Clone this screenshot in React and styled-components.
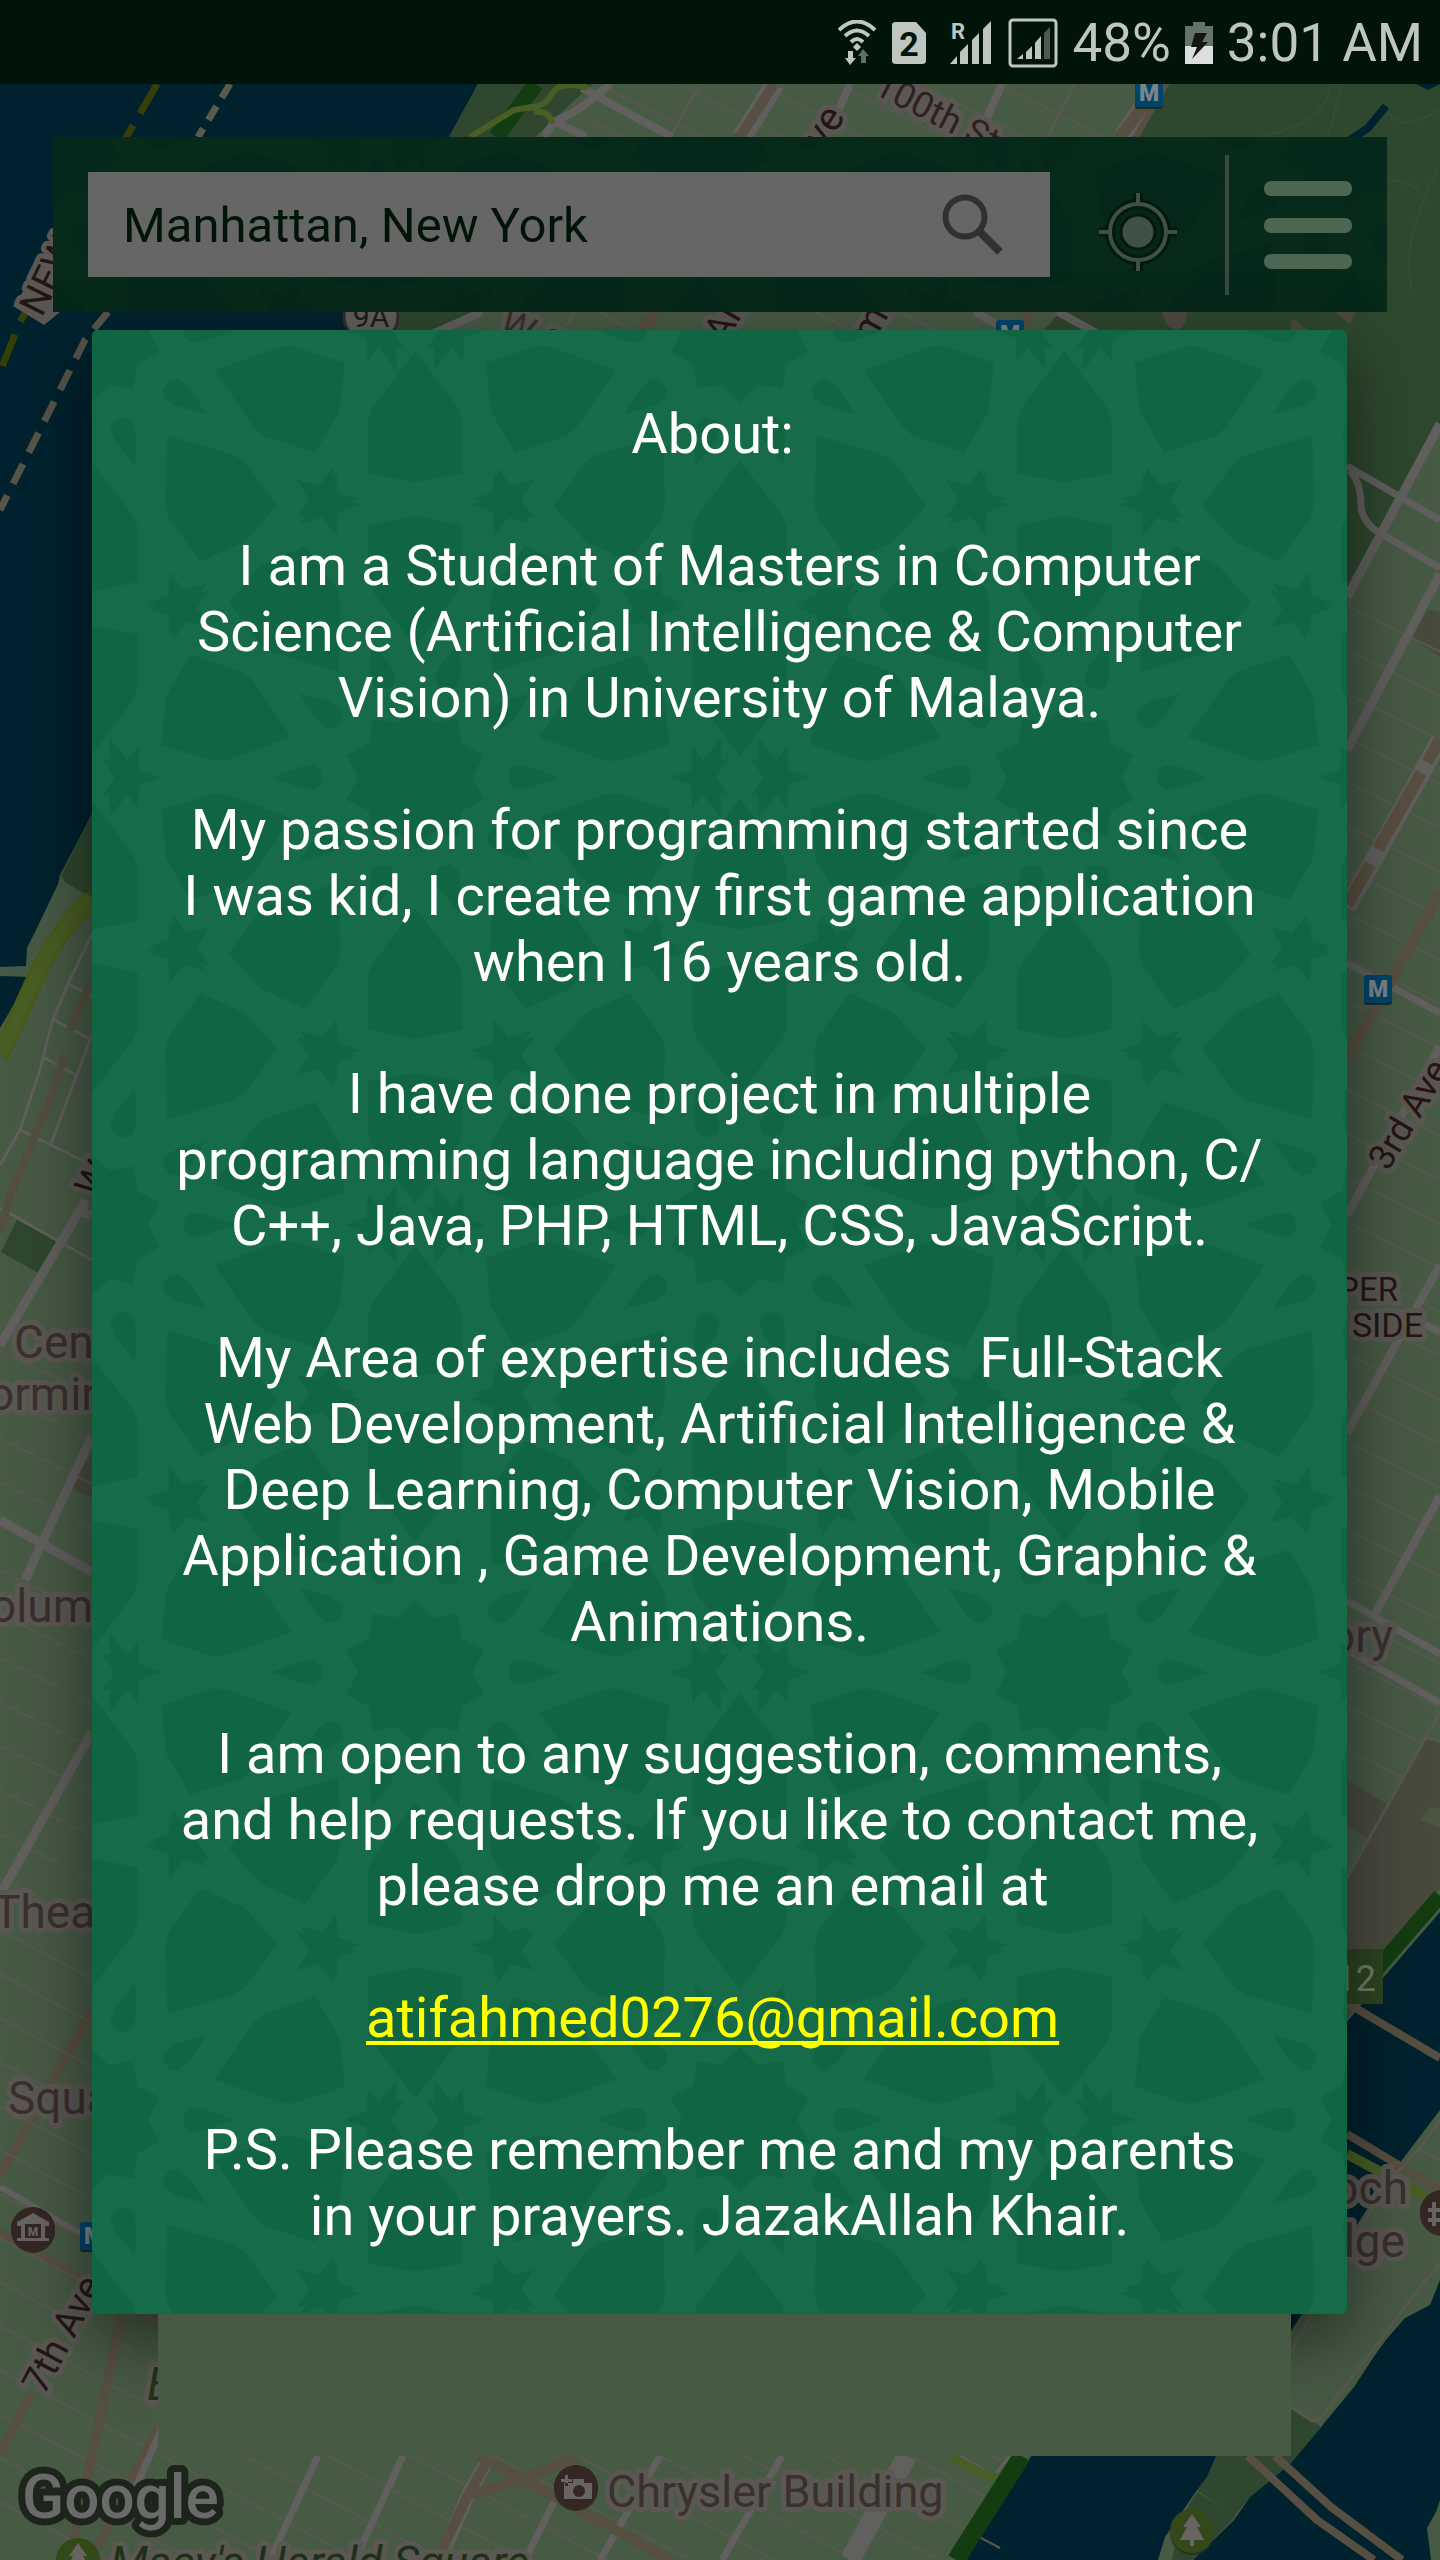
import React from "react";
import styled, { createGlobalStyle } from "styled-components";

const color = {
  bar: "#001408",
  status: "#bfc6c1",
  land: "#475a44",
  water: "#00222e",
  park: "#2e472e",
  road: "#61605f",
  lane: "#585850",
  avenue: "#574f41",
  freeway: "#133c10",
  ramp: "#485e24",
  block: "#494a3e",
  poi: "#342624",
  label: "#3a302d",
  halo: "#5b5853",
};

const GlobalStyle = createGlobalStyle`
  *, *::before, *::after { box-sizing: border-box; }
  body { margin: 0; background: ${color.land}; }
`;

const Page = styled.div`
  position: relative;
  min-height: 100vh;
  overflow: hidden;
  font-family: Roboto, "Liberation Sans", sans-serif;
  background: ${color.land};
`;

const MapCanvas = styled.svg`
  position: absolute;
  inset: 0;
  width: 100%;
  height: 100%;
`;

const Content = styled.div`
  position: relative;
  display: flex;
  flex-direction: column;
`;

const StatusBar = styled.header`
  display: flex;
  justify-content: flex-end;
  align-items: center;
  gap: 14px;
  height: 84px;
  padding: 2px 17px 0;
  background: ${color.bar};
  color: ${color.status};
  font-size: 53px;
  line-height: 64px;
`;

const StatusIcon = styled.svg`
  display: block;
  flex: none;
`;

const Toolbar = styled.form`
  position: relative;
  display: flex;
  align-items: center;
  height: 175px;
  margin: 53px 53px 0;
  padding: 0 0 0 35px;
  background: #06281a;
`;

const SearchBox = styled.div`
  position: relative;
  flex: 1;
  display: flex;
  align-items: center;
  height: 105px;
  padding: 0 40px 0 35px;
  background: #666666;
`;

const SearchInput = styled.input`
  flex: 1;
  min-width: 0;
  height: 100%;
  padding: 2px 0 0;
  border: 0;
  outline: 0;
  background: transparent;
  color: ${color.bar};
  font: 49px Roboto, "Liberation Sans", sans-serif;
`;

const IconButton = styled.button`
  position: relative;
  display: flex;
  align-items: center;
  justify-content: center;
  flex: none;
  width: ${(p) => p.$width}px;
  height: 140px;
  padding: ${(p) => p.$drop || 0}px 0 0;
  border: 0;
  background: transparent;
`;

const Divider = styled.span`
  position: relative;
  width: 4px;
  height: 140px;
  background: #3a4a42;
`;

const Modal = styled.section`
  position: relative;
  margin: 18px 93px 0 92px;
  padding: 71px 64px 65px;
  border-radius: 6px;
  background: #106643;
  box-shadow: 0 24px 72px rgba(0, 0, 0, 0.5);
  color: #ffffff;
  font-size: 56px;
  line-height: 66px;
  text-align: center;
`;

const PatternLayer = styled.svg`
  position: absolute;
  inset: 0;
  width: 100%;
  height: 100%;
  border-radius: inherit;
`;

const Heading = styled.h1`
  position: relative;
  margin: 0 0 66px;
  font: inherit;
`;

const Paragraph = styled.p`
  position: relative;
  margin: 0 0 66px;
  white-space: pre-wrap;

  &:last-child { margin-bottom: 0; }
`;

const MailLink = styled.a`
  color: #ffff00;
  text-decoration: underline;
  text-decoration-thickness: 4px;
  text-underline-offset: 4px;
  text-decoration-skip-ink: none;
`;

const BlankPanel = styled.div`
  position: relative;
  height: 142px;
  margin: 0 149px 0 158px;
  background: ${color.land};
`;

/* ---------- girih tiling used on the toolbar and the dialog ---------- */

const polar = (r, deg) => {
  const a = (deg * Math.PI) / 180;
  return [r * Math.cos(a), r * Math.sin(a)];
};

const starPoints = (n, outer, inner, offset) =>
  Array.from({ length: n * 2 }, (_, i) =>
    polar(i % 2 ? inner : outer, offset + (i * 180) / n)
      .map((v) => v.toFixed(1))
      .join(",")
  ).join(" ");

const TEN = Array.from({ length: 10 }, (_, i) => i * 36);

function Rosette({ id }) {
  return (
    <g id={id}>
      <polygon points={starPoints(10, 172, 136, 18)} />
      {TEN.map((d) => (
        <g key={d}>
          <path transform={`rotate(${d})`} d="M222 -14 L238 -28 L270 -26 L340 0 L270 26 L238 28 L222 14Z" />
          <path transform={`rotate(${d + 18})`} d="M310 0 L440 -100 L470 -112 L598 -112 L622 0 L598 112 L470 112 L440 100Z" />
          <polygon transform={`rotate(${d}) translate(682 0)`} points={starPoints(5, 78, 32, 180)} />
        </g>
      ))}
      {[90, 270].map((d) => (
        <g key={d} transform={`rotate(${d})`}>
          <path d="M1013 0 L880 -100 L850 -112 L722 -112 L702 0 L722 112 L850 112 L880 100Z" />
          <path d="M968 -45 L1066 -120 L1066 -75 L1030 -45Z" />
          <path d="M968 45 L1066 120 L1066 75 L1030 45Z" />
        </g>
      ))}
    </g>
  );
}

function GirihPattern({ id, base, line }) {
  const cells = [];
  for (let c = 0; c < 6; c += 1)
    for (let r = 0; r < 7; r += 1)
      if ((c + r) % 2 === 0) cells.push([c * 771 - 3, r * 1063]);
  return (
    <PatternLayer aria-hidden="true">
      <rect width="100%" height="100%" fill={line} />
      <defs><Rosette id={id} /></defs>
      <g fill={base} transform="scale(0.4209)">
        {cells.map(([x, y]) => (
          <use key={`${x}-${y}`} href={`#${id}`} x={x} y={y} />
        ))}
      </g>
    </PatternLayer>
  );
}

/* ---------- map ---------- */

const Road = ({ d, c = color.road, w = 8, ...rest }) => (
  <path d={d} stroke={c} strokeWidth={w} fill="none" strokeLinejoin="round" {...rest} />
);

const Lanes = ({ x1, x2, from, to, step = 44, slope = 0.49 }) => {
  let d = "";
  for (let y = from; y <= to; y += step) d += `M${x1} ${y}L${x2} ${y + (x2 - x1) * slope}`;
  return <Road d={d} c={color.lane} w={2} />;
};

const Label = ({ x, y, size = 46, rotate = 0, fill = color.label, halo = color.halo, children, ...rest }) => (
  <text
    transform={`translate(${x} ${y}) rotate(${rotate})`}
    fontSize={size}
    fill={fill}
    stroke={halo}
    strokeWidth="10"
    strokeLinejoin="round"
    paintOrder="stroke"
    {...rest}
  >
    {children}
  </text>
);

const Metro = ({ x, y }) => (
  <g transform={`translate(${x} ${y})`}>
    <rect y="2" width="28" height="28" rx="3" fill="#1c2a20" />
    <rect width="28" height="28" rx="3" fill="#00446a" />
    <text x="14" y="22" textAnchor="middle" fontSize="23" fontWeight="900" fill="#7b8589">M</text>
  </g>
);

const Poi = ({ x, y, fill = color.poi, children }) => (
  <g transform={`translate(${x} ${y})`}>
    <circle cy="2" r="22" fill="#2c2f26" />
    <circle r="22" fill={fill} />
    <g fill="#686462">{children}</g>
  </g>
);

const Tree = () => <path d="M0-17 9-4H5L12 9H2V15H-2V9H-12L-5-4H-9Z" />;

function CityMap() {
  const dark = "#241614";
  return (
    <MapCanvas viewBox="0 0 1440 2560" preserveAspectRatio="xMidYMin slice" aria-hidden="true">
      <rect width="1440" height="2560" fill={color.land} />

      <path fill={color.water} d="M0 84H478L449 137 385 312 92 814 60 875 58 884 36 930 27 948 26 966 0 967Z M0 976 30 977 0 1028Z" />
      <path fill={color.park} d="M478 84H592L535 137H449Z M400 312H480L440 332H390Z M92 814 61 876 65 882 92 898Z" />
      <path fill={color.park} d="M17 1220 57 1241 38 1273 1 1252Z" />
      <path fill={color.block} d="M1428 609 1440 612V657L1412 638Z M1347 1780 1387 1804 1368 1838 1347 1826Z M92 1454 66 1486 92 1498Z" />

      {/* ferry routes */}
      <Road d="M157 84 20 322 0 372" c="#363f08" w={7} strokeDasharray="34 14" />
      <Road d="M230 84 198 137" c="#5b594b" w={7} strokeDasharray="16 10" />
      <Road d="M108 312 85 340 0 510" c="#57554a" w={7} strokeDasharray="22 13" />

      {/* north-west streets */}
      <Lanes x1={590} x2={1130} from={-120} to={120} step={40} slope={0.5} />
      <path fill={color.park} d="M1170 84H1440V425L1347 598 1180 345 1030 345 1060 312 1120 137Z" />
      <path fill="#4e4a40" d="M1162 312H1187Q1186 330 1175 330 1164 326 1162 312Z M1290 330 1292 318 1308 330Z M1335 312H1355L1350 324Z" />
      <path fill={color.water} d="M1416 84H1440L1428 90Z" />
      <Road d="M1386 106 1368 128 1350 140" c={color.water} w={8} />
      <Road d="M1330 84Q1330 120 1262 137M1342 84Q1336 110 1326 140M1388 112Q1405 135 1440 108M1388 180Q1410 182 1420 190M1438 170Q1400 240 1412 290" c="#344d33" w={2} />
      <Road d="M700 84 670 137M1075 84 1048 137" c={color.lane} w={3} />
      <Road d="M610 84 594 98 574 112 554 122 544 137M582 88 672 137M556 122 586 137" />
      <Road d="M850 84 835 118M1002 84 984 124" />
      <Road d="M775 84 742 137" w={20} />
      <Road d="M774 84 740 137" c={color.avenue} w={10} />
      <Road d="M1158 84 1122 137" w={18} />
      <Road d="M1160 84 1120 137" c={color.avenue} w={12} />
      <Road d="M1166 84 1136 137" c={color.avenue} w={6} />
      <Road d="M536 84 496 137" c={color.freeway} w={16} />
      <Road d="M588 88Q560 80 552 94 546 104 538 106L514 110 470 137M534 112Q550 110 552 124" c={color.ramp} w={6} />
      <Road d="M482 312 430 335M1058 312 1100 335M975 312 1010 332" />
      <Road d="M655 312 640 335M1030 312 1018 335" c={color.avenue} w={12} />
      <Road d="M575 312 560 335M600 312 640 335M815 312 860 335M900 312 945 335" c={color.lane} w={3} />

      {/* east streets */}
      <Lanes x1={1347} x2={1440} from={606} to={1790} />
      <Road d="M1440 424 1347 597M1440 574 1347 750" w={9} />
      <Road d="M1347 466 1440 520M1350 470Q1362 485 1361 508 1364 524 1380 533L1440 568M1347 963 1440 1013" w={7} />
      <Road d="M1440 740 1347 908" w={18} />
      <Road d="M1440 740 1427 762M1421 773 1378 849M1370 864 1347 905" c={color.avenue} w={12} />
      <Road d="M1440 893 1347 1059" c={color.avenue} w={10} />
      <Road d="M1440 1046 1347 1215M1440 1265 1347 1433M1440 1496 1372 1619" w={8} />
      <Road d="M1400 1312 1440 1332M1347 1601 1440 1654M1347 1650 1440 1703" w={7} />
      <path fill={color.block} d="M1347 1878 1426 1738 1440 1741V1889L1383 1960 1347 2020Z" />
      <path fill="#48583f" d="M1420 1820 1430 1807 1440 1808V1828Z" />
      <Road d="M1440 1712 1347 1878M1426 1738 1440 1741" c={color.lane} w={3} />

      {/* east river */}
      <path fill={color.water} d="M1440 1912 1383 1978 1347 2022V2240L1383 2185 1440 2110Z" />
      <Road d="M1440 1896 1376 1970" c={color.freeway} w={15} />
      <Road d="M1347 2003 1440 2058M1347 2134 1440 2190" c={color.avenue} w={8} />
      <Road d="M1347 2154 1440 2204" c={color.ramp} w={10} />
      <Road d="M1440 2120 1420 2148 1390 2180 1347 2250M1420 2150 1440 2160" c={color.lane} w={3} />
      <path fill={color.water} d="M1440 2280 1430 2305 1405 2318 1386 2340 1375 2355 1354 2387 1321 2427 1291 2463 1250 2497 1234 2520 1193 2560H1431L1427 2528 1436 2512 1440 2500Z M1285 2314H1302L1285 2340Z" />
      <path fill={color.park} d="M1291 2407 1321 2427 1291 2463 1250 2497 1234 2516 1197 2490 1207 2477 1216 2456Z" />
      <path fill={color.water} d="M1031 2456H1216L1207 2477 1197 2490 1165 2537 1158 2560H966Z" />
      <path fill={color.park} d="M1197 2492 1236 2516 1193 2560H1172L1180 2520Z" />
      <Road d="M1440 2265 1424 2282 1320 2419 1312 2421 1291 2407M1312 2314 1291 2352" c={color.lane} w={3} />
      <Road d="M1248 2456 1317 2520 1374 2560M1275 2456 1331 2507 1402 2560" c={color.avenue} w={8} />

      {/* west side */}
      <Lanes x1={0} x2={92} from={1350} to={1920} slope={0.5} />
      <Road d="M92 898Q60 930 40 968L0 1056" c="#4c5a12" w={18} />
      <Road d="M92 898Q60 930 40 968L0 1056" c={color.ramp} w={13} />
      <Road d="M92 934 68 984 52 1022 40 1070 20 1130 0 1165M68 984 92 996M54 1020 92 1040M43 1057 78 1076M20 1130 92 1165M92 1035 50 1146M0 1208 92 1260" c={color.road} w={3} />
      <Road d="M92 980 70 1030M64 1056 50 1100 10 1196 0 1232" c="#534f40" w={8} />
      <Road d="M86 1200 0 1345M78 1210 92 1216M92 1436 25 1580M0 1520 92 1572M92 1732 0 1895" w={9} />
      <Road d="M92 2010 0 2175M0 2232 158 2323" c={color.avenue} w={9} />
      <Road d="M0 2187 92 2240" w={6} />

      {/* midtown */}
      <Lanes x1={0} x2={1000} from={1930} to={2540} step={44} slope={0.53} />
      <Road d="M122 2314 74 2540M32 2393 0 2453M158 2427 98 2547" c={color.avenue} w={9} />
      <Road d="M161 2430 128 2505M318 2456 270 2560M403 2456 355 2560M555 2500 525 2560M660 2456 600 2560M782 2456 722 2560" w={7} />
      <Road d="M907 2456 850 2560" w={20} />
      <Road d="M490 2456 468 2495 440 2560" w={14} />
      <Road d="M488 2460 468 2495 437 2560M577 2458 520 2480 470 2495M478 2456 525 2480 670 2560" c={color.avenue} w={10} />
      <path fill={color.land} d="M1010 2456H1031L966 2560H946Z" />
      <Road d="M960 2456 994 2476 1010 2456" c={color.road} w={3} />
      <Road d="M950 2456 990 2477 1000 2477" c={color.ramp} w={8} />
      <Road d="M1022 2456 956 2560" c={color.freeway} w={18} />

      {/* street names and places */}
      <path fill={color.halo} d="M13 306 48 255 60 270V312L44 325Z" />
      <Label x={42} y={318} size={38} rotate={-64} fill={dark}>NEW</Label>
      <Label x={811} y={172} size={40} rotate={-58} fill={dark}>Ave</Label>
      <Label x={872} y={93} size={36} rotate={27} fill="#30211f">100th St</Label>
      <circle cx="371" cy="316" r="27" fill="#625f5e" stroke="#2e2f2e" strokeWidth="3" />
      <text x="371" y="327" fontSize="30" textAnchor="middle" fill="#1c1c1c">9A</text>
      <Label x={497} y={330} size={38} rotate={27}>W 9</Label>
      <Label x={725} y={345} size={38} rotate={-60} fill={dark}>Am</Label>
      <Label x={862} y={362} size={38} rotate={-60} fill={dark}>umb</Label>
      <Metro x={1135} y={79} />
      <Metro x={996} y={320} />
      <Metro x={1364} y={975} />
      <Metro x={80} y={2222} />
      <Label x={1388} y={1172} size={36} rotate={-59} fill={dark}>3rd Ave</Label>
      <Label x={1398} y={1301} size={33} textAnchor="end" fill={dark}>UPPER</Label>
      <Label x={1423} y={1337} size={34} textAnchor="end" fill={dark}>EAST SIDE</Label>
      <Label x={1393} y={1652} textAnchor="end">Armory</Label>
      <rect x="1290" y="1949" width="93" height="55" fill="#2c4420" />
      <text x="1376" y="1991" fontSize="36" textAnchor="end" fill="#727c6c">12</text>
      <Label x={1408} y={2204} textAnchor="end">Koch</Label>
      <Label x={1405} y={2257} textAnchor="end">Bridge</Label>
      <Poi x={1442} y={2212}><path d="M-14-4H6V0H-14ZM-14 6H6V10H-14ZM-10-10H-6V14H-10ZM-2-14H2V14H-2Z" /></Poi>
      <Label x={96} y={1200} size={38} rotate={-60} fill={dark}>W</Label>
      <Label x={14} y={1358}>Center</Label>
      <Label x={-28} y={1410}>forming</Label>
      <Label x={-40} y={1622}>Columbus</Label>
      <Label x={-7} y={1928}>Theatre</Label>
      <Label x={8} y={2114}>Square</Label>
      <Poi x={33} y={2229}>
        <path fillRule="evenodd" d="M0-16 16-7V-3H12V9H16V12H-16V9H-12V-3H-16V-7ZM-8-5V9H8V-5Z" />
        <text y="7" fontSize="12" fontWeight="900" textAnchor="middle">M</text>
      </Poi>
      <Label x={44} y={2396} size={38} rotate={-62} fill={dark}>7th Ave</Label>
      <Label x={147} y={2400} size={46} fill="#23331a" fontStyle="italic">Empire</Label>
      <Poi x={576} y={2487}>
        <path fillRule="evenodd" d="M-12-4H-3V-8H8V-4H16V12H-12ZM3-2A6 6 0 1 0 3 10 6 6 0 1 0 3-2ZM-15-8H-11V-12H-8V-8H-4V-5H-8V-1H-11V-5H-15Z" />
      </Poi>
      <Label x={607} y={2507} size={45}>Chrysler Building</Label>
      <Poi x={1192} y={2531} fill="#33491a"><Tree /></Poi>
      <Poi x={78} y={2560} fill="#33491a"><Tree /></Poi>
      <Label x={110} y={2578} size={45} fill="#203018" fontStyle="italic">Macy's Herald Square</Label>
      <Label x={22} y={2518} size={62} fill="#6a6a6a" halo="#1d241c" fontWeight="500" style={{ strokeWidth: 14 }}>Google</Label>
    </MapCanvas>
  );
}

/* ---------- status icons ---------- */

const WifiIcon = () => (
  <StatusIcon width="40" height="46" viewBox="0 0 40 46" fill="none" stroke="currentColor" strokeWidth="4" aria-label="Wi-Fi">
    <path d="M1 10Q19-7 37 10M7 16Q19 5 31 16M13 22Q19 16 25 22" />
    <path fill="currentColor" stroke="none" d="M19 23 23 27 19 31 15 27Z M10 31H15V38H18L12 45 7 38H10Z" />
    <path fill="#5f6e66" stroke="none" d="M23 43H28V36H31L25 29 20 36H23Z" />
  </StatusIcon>
);

const SimIcon = () => (
  <StatusIcon width="34" height="44" viewBox="0 0 34 44" aria-label="SIM 2">
    <path fill="currentColor" d="M4 1H24L34 12V40Q34 43 30 43H4Q0 43 0 40V4Q0 1 4 1Z" />
    <text x="17" y="35" fontSize="34" fontWeight="700" textAnchor="middle" fill={color.bar}>2</text>
  </StatusIcon>
);

const RoamingIcon = () => (
  <StatusIcon width="52" height="44" viewBox="0 0 52 44" fill="currentColor" aria-label="Roaming signal">
    <text x="11" y="18" fontSize="22" fontWeight="700">R</text>
    <path d="M10 43 17 35V43ZM20 31 28 23V43H20ZM32 19 39 12V43H32ZM43 8 51 0V43H43Z" />
  </StatusIcon>
);

const SignalIcon = () => (
  <StatusIcon width="52" height="50" viewBox="0 0 52 50" fill="currentColor" aria-label="Signal">
    <rect x="4" y="2" width="46" height="46" rx="3" fill="none" stroke="currentColor" strokeWidth="3" />
    <path d="M11 41 17 36V41ZM20 34 26 28V41H20ZM29 25 35 18V41H29Z" />
    <path fill="#4c5a51" d="M38 15 44 9V41H38Z" />
  </StatusIcon>
);

const BatteryIcon = () => (
  <StatusIcon width="28" height="42" viewBox="0 0 28 42" aria-label="Charging">
    <path fill="#65736a" d="M8 0H20V4H28V24H0V4H8Z" />
    <path fill="#dcdfdd" d="M0 24H28V42H0Z" />
    <path fill="#151515" d="M10 11H22L17 20H23L7 37 12 25H6Z" />
  </StatusIcon>
);

const SearchIcon = () => (
  <svg width="62" height="62" viewBox="0 0 62 62" fill="none" stroke="#303030">
    <circle cx="23" cy="23" r="19.5" strokeWidth="6" />
    <path d="M38 38 58 58" strokeWidth="8" />
  </svg>
);

const LocateIcon = () => (
  <svg width="84" height="84" viewBox="0 0 84 84" fill="none">
    {[["#03190f", 10], ["#3f5147", 4]].map(([stroke, width]) => (
      <g key={stroke} stroke={stroke} strokeWidth={width}>
        <circle cx="42" cy="42" r="28" />
        <path d="M42 14V3M42 70V81M14 42H3M70 42H81" />
      </g>
    ))}
    <circle cx="42" cy="42" r="17" fill="#3f5147" stroke="#03190f" strokeWidth="3" />
  </svg>
);

const MenuIcon = () => (
  <svg width="88" height="88" viewBox="0 0 88 88" fill="#4c6652">
    <rect width="88" height="15" rx="7" />
    <rect y="37" width="88" height="15" rx="7" />
    <rect y="73" width="88" height="15" rx="7" />
  </svg>
);

const paragraphs = [
  ["I am a Student of Masters in Computer", "Science (Artificial Intelligence & Computer", "Vision) in University of Malaya."],
  ["My passion for programming started since", "I was kid, I create my first game application", "when I 16 years old."],
  ["I have done project in multiple", "programming language including python, C/", "C++, Java, PHP, HTML, CSS, JavaScript."],
  ["My Area of expertise includes  Full-Stack", "Web Development, Artificial Intelligence &", "Deep Learning, Computer Vision, Mobile", "Application , Game Development, Graphic &", "Animations."],
  ["I am open to any suggestion, comments,", "and help requests. If you like to contact me,", "please drop me an email at\u00a0"],
];

export default function App() {
  return (
    <Page>
      <GlobalStyle />
      <CityMap />
      <Content>
        <StatusBar>
          <WifiIcon />
          <SimIcon />
          <RoamingIcon />
          <SignalIcon />
          <span>48%</span>
          <BatteryIcon />
          <time>3:01 AM</time>
        </StatusBar>

        <Toolbar role="search" onSubmit={(e) => e.preventDefault()}>
          <GirihPattern id="rosette-bar" base="#06281a" line="#082a1b" />
          <SearchBox>
            <SearchInput aria-label="Search location" defaultValue="Manhattan, New York" />
            <IconButton type="submit" aria-label="Search" $width={74}><SearchIcon /></IconButton>
          </SearchBox>
          <IconButton type="button" aria-label="My location" $width={175} $drop={14}><LocateIcon /></IconButton>
          <Divider />
          <IconButton type="button" aria-label="Menu" $width={158}><MenuIcon /></IconButton>
        </Toolbar>

        <Modal role="dialog" aria-labelledby="about-title">
          <GirihPattern id="rosette-dialog" base="#106643" line="#166b48" />
          <Heading id="about-title">About:&nbsp;</Heading>
          {paragraphs.map((lines) => (
            <Paragraph key={lines[0]}>{lines.join("\n")}</Paragraph>
          ))}
          <Paragraph>
            <MailLink href="mailto:atifahmed0276@gmail.com">atifahmed0276@gmail.com</MailLink>&nbsp;
          </Paragraph>
          <Paragraph>{"P.S. Please remember me and my parents\nin your prayers. JazakAllah Khair."}</Paragraph>
        </Modal>
        <BlankPanel />
      </Content>
    </Page>
  );
}
